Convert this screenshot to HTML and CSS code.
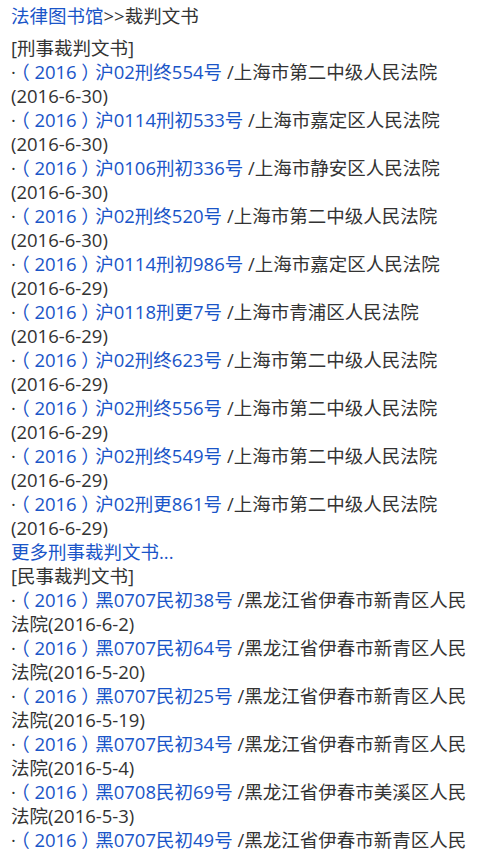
FILE: index.html
```html
<!DOCTYPE html>
<html lang="zh-CN">
<head>
<meta charset="utf-8">
<link rel="stylesheet" href="styles.css">
</head>
<body>
<div class="crumb"><a href="#">法律图书馆</a>&gt;&gt;裁判文书</div>
<div class="section">
<div class="head">[刑事裁判文书]</div>
<div class="item">·<a href="#"><span class="p">（</span>2016<span class="p">）</span>沪02刑终554号</a> /上海市第二中级人民法院<span class="d">(2016-6-30)</span></div>
<div class="item">·<a href="#"><span class="p">（</span>2016<span class="p">）</span>沪0114刑初533号</a> /上海市嘉定区人民法院<span class="d">(2016-6-30)</span></div>
<div class="item">·<a href="#"><span class="p">（</span>2016<span class="p">）</span>沪0106刑初336号</a> /上海市静安区人民法院<span class="d">(2016-6-30)</span></div>
<div class="item">·<a href="#"><span class="p">（</span>2016<span class="p">）</span>沪02刑终520号</a> /上海市第二中级人民法院<span class="d">(2016-6-30)</span></div>
<div class="item">·<a href="#"><span class="p">（</span>2016<span class="p">）</span>沪0114刑初986号</a> /上海市嘉定区人民法院<span class="d">(2016-6-29)</span></div>
<div class="item">·<a href="#"><span class="p">（</span>2016<span class="p">）</span>沪0118刑更7号</a> /上海市青浦区人民法院<span class="d">(2016-6-29)</span></div>
<div class="item">·<a href="#"><span class="p">（</span>2016<span class="p">）</span>沪02刑终623号</a> /上海市第二中级人民法院<span class="d">(2016-6-29)</span></div>
<div class="item">·<a href="#"><span class="p">（</span>2016<span class="p">）</span>沪02刑终556号</a> /上海市第二中级人民法院<span class="d">(2016-6-29)</span></div>
<div class="item">·<a href="#"><span class="p">（</span>2016<span class="p">）</span>沪02刑终549号</a> /上海市第二中级人民法院<span class="d">(2016-6-29)</span></div>
<div class="item">·<a href="#"><span class="p">（</span>2016<span class="p">）</span>沪02刑更861号</a> /上海市第二中级人民法院<span class="d">(2016-6-29)</span></div>
<div class="more"><a href="#">更多刑事裁判文书...</a></div>
</div>
<div class="section">
<div class="head">[民事裁判文书]</div>
<div class="item">·<a href="#"><span class="p">（</span>2016<span class="p">）</span>黑0707民初38号</a> /黑龙江省伊春市新青区人民法院<span class="d">(2016-6-2)</span></div>
<div class="item">·<a href="#"><span class="p">（</span>2016<span class="p">）</span>黑0707民初64号</a> /黑龙江省伊春市新青区人民法院<span class="d">(2016-5-20)</span></div>
<div class="item">·<a href="#"><span class="p">（</span>2016<span class="p">）</span>黑0707民初25号</a> /黑龙江省伊春市新青区人民法院<span class="d">(2016-5-19)</span></div>
<div class="item">·<a href="#"><span class="p">（</span>2016<span class="p">）</span>黑0707民初34号</a> /黑龙江省伊春市新青区人民法院<span class="d">(2016-5-4)</span></div>
<div class="item">·<a href="#"><span class="p">（</span>2016<span class="p">）</span>黑0708民初69号</a> /黑龙江省伊春市美溪区人民法院<span class="d">(2016-5-3)</span></div>
<div class="item">·<a href="#"><span class="p">（</span>2016<span class="p">）</span>黑0707民初49号</a> /黑龙江省伊春市新青区人民法院<span class="d">(2016-5-2)</span></div>
</div>
</body>
</html>
```
FILE: styles.css
```css
html, body {
  margin: 0;
  background: #ffffff;
}
body {
  padding: 4px 8px 0 11px;
  font-family: "Open Sans", "Noto Sans CJK SC", sans-serif;
  font-size: 18.5px;
  line-height: 24px;
  color: #333333;
}
a {
  color: #1a55c8;
  text-decoration: none;
}
.crumb {
  margin-bottom: 8px;
}
.p {
  display: inline-block;
  width: 1em;
  text-align: center;
  line-height: 1;
  font-family: "Noto Sans CJK SC", sans-serif;
  font-feature-settings: "halt" 1;
}
.d {
  white-space: nowrap;
}
```
